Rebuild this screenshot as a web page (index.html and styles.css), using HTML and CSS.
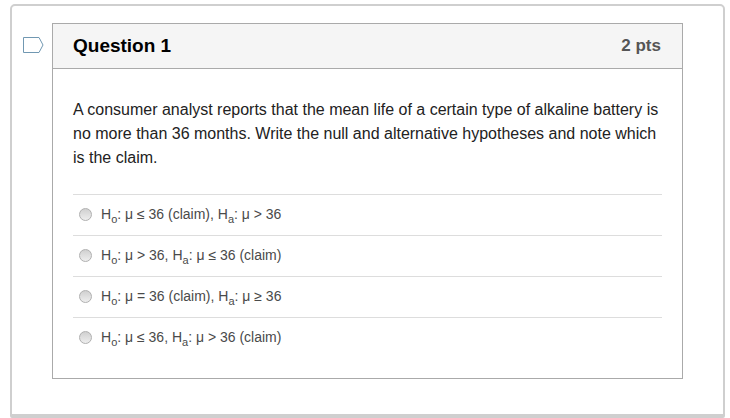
FILE: index.html
```html
<!DOCTYPE html>
<html lang="en">
<head>
  <meta charset="UTF-8">
  <title>Question 1</title>
  <link rel="stylesheet" href="styles.css">
</head>
<body>
  <div class="frame">
    <div class="flag-col">
      <svg class="flag" width="21" height="16" viewBox="0 0 21 16">
        <path d="M0.5 0.5H16L20 8L16 15.5H0.5Z" fill="#fff" stroke="#7198b2" stroke-width="1"/>
      </svg>
    </div>
    <div class="question">
      <div class="question-header">
        <div class="question-title">Question 1</div>
        <div class="question-pts">2 pts</div>
      </div>
      <div class="question-body">
        <p class="question-text">A consumer analyst reports that the mean life of a certain type of alkaline battery is no more than 36 months. Write the null and alternative hypotheses and note which is the claim.</p>
        <div class="answers">
          <div class="answer">
            <span class="radio"></span>
            <span>H<sub>o</sub>: μ ≤ 36 (claim), H<sub>a</sub>: μ &gt; 36</span>
          </div>
          <div class="answer">
            <span class="radio"></span>
            <span>H<sub>o</sub>: μ &gt; 36, H<sub>a</sub>: μ ≤ 36 (claim)</span>
          </div>
          <div class="answer">
            <span class="radio"></span>
            <span>H<sub>o</sub>: μ = 36 (claim), H<sub>a</sub>: μ ≥ 36</span>
          </div>
          <div class="answer">
            <span class="radio"></span>
            <span>H<sub>o</sub>: μ ≤ 36, H<sub>a</sub>: μ &gt; 36 (claim)</span>
          </div>
        </div>
      </div>
    </div>
  </div>
</body>
</html>
```

FILE: styles.css
```css
body {
  margin: 0;
  padding: 0;
  background: #fff;
  font-family: "Liberation Sans", Arial, sans-serif;
  overflow: hidden;
}

.frame {
  box-sizing: border-box;
  display: flex;
  width: 715px;
  height: 414px;
  margin: 4px 0 0 10px;
  padding: 17px 40px 0 11px;
  border: 2px solid #cfcfcf;
  border-bottom-width: 4px;
  border-radius: 5px 5px 2px 2px;
}

.flag-col {
  width: 29px;
  flex: none;
}

.flag {
  display: block;
  margin-top: 14px;
}

.question {
  box-sizing: border-box;
  width: 631px;
  height: 356px;
  border: 1px solid #aaa;
}

.question-header {
  box-sizing: border-box;
  display: flex;
  justify-content: space-between;
  align-items: center;
  height: 45px;
  padding: 0 21px 0 20px;
  background: #f5f5f5;
  border-bottom: 1px solid #aaa;
}

.question-title {
  font-size: 19px;
  font-weight: bold;
  color: #000;
}

.question-pts {
  font-size: 17px;
  font-weight: bold;
  color: #555;
}

.question-body {
  padding: 29px 20px 0;
}

.question-text {
  margin: 0 0 24px;
  font-size: 16px;
  line-height: 24px;
  color: #222;
}

.answer {
  display: flex;
  align-items: center;
  height: 41px;
  box-sizing: border-box;
  padding: 0 0 2px 6px;
  border-top: 1px solid #ddd;
  font-size: 14px;
  color: #4a4a4a;
}

.radio {
  box-sizing: border-box;
  width: 13px;
  height: 13px;
  margin-right: 9px;
  border: 1px solid #b0b0b0;
  border-radius: 50%;
  background: linear-gradient(#d0d0d0, #eee);
}

sub {
  font-size: 11px;
  line-height: 0;
}
```
